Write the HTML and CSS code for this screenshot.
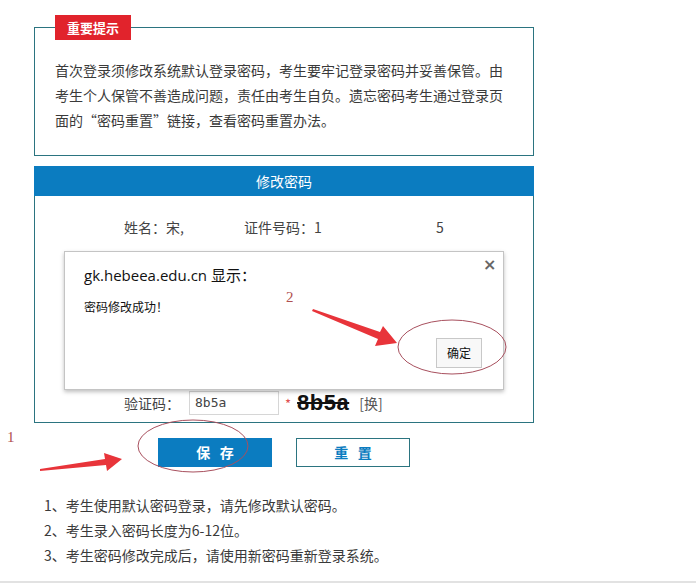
FILE: index.html
```html
<!DOCTYPE html>
<html lang="zh-CN">
<head>
<meta charset="utf-8">
<title>修改密码</title>
<link rel="stylesheet" href="styles.css">
</head>
<body>
<div class="page">
  <div class="notice">
    <div class="notice-tag">重要提示</div>
    <p class="notice-text">首次登录须修改系统默认登录密码，考生要牢记登录密码并妥善保管。由考生个人保管不善造成问题，责任由考生自负。遗忘密码考生通过登录页面的“密码重置”链接，查看密码重置办法。</p>
  </div>

  <div class="panel-head">修改密码</div>
  <div class="panel">
    <div class="row-info">
      <span class="name">姓名：宋,</span>
      <span class="idno">证件号码：1</span>
      <span class="idend">5</span>
    </div>
    <div class="spacer"></div>
    <div class="row-code">
      <span class="label">验证码：</span>
      <span class="input">8b5a</span>
      <span class="star">*</span>
      <span class="captcha">8b5a</span>
      <span class="swap">[换]</span>
    </div>
  </div>

  <div class="actions">
    <span class="btn btn-save">保&nbsp;&nbsp;&nbsp;存</span>
    <span class="btn btn-reset">重&nbsp;&nbsp;&nbsp;置</span>
  </div>

  <ol class="tips">
    <li>1、考生使用默认密码登录，请先修改默认密码。</li>
    <li>2、考生录入密码长度为6-12位。</li>
    <li>3、考生密码修改完成后，请使用新密码重新登录系统。</li>
  </ol>
</div>
<div class="bottom-line"></div>

<div class="dialog">
  <div class="dialog-title">gk.hebeea.edu.cn 显示：</div>
  <span class="dialog-close">×</span>
  <div class="dialog-msg">密码修改成功！</div>
  <span class="dialog-ok">确定</span>
</div>

<svg class="marks" width="696" height="586" viewBox="0 0 696 586">
  <ellipse cx="452" cy="347" rx="54" ry="27" fill="none" stroke="#a8505e" stroke-width="1"/>
  <ellipse cx="193" cy="446" rx="55" ry="26" fill="none" stroke="#a8505e" stroke-width="1"/>
  <polygon points="313,309 380,332 383,326 397,343 375,346 378,339 312,311" fill="#e8343a"/>
  <polygon points="40,469 105,459 104,453 122,459 107,471 106,465 40,471" fill="#e8343a"/>
  <text x="286" y="302" class="num">2</text>
  <text x="7" y="442" class="num">1</text>
</svg>
</body>
</html>
```

FILE: styles.css
```css
* { box-sizing: border-box; }
html, body {
  margin: 0;
  padding: 0;
  background: #ffffff;
  width: 696px;
  height: 586px;
  overflow: hidden;
  position: relative;
  font-family: "Noto Sans CJK SC", "Microsoft YaHei", sans-serif;
  color: #333;
}
.page {
  margin-left: 34px;
  width: 500px;
  padding-top: 27px;
}
.notice {
  position: relative;
  border: 1px solid #2b7480;
  height: 129px;
  padding: 30px 20px 0 20px;
}
.notice-tag {
  position: absolute;
  left: 20px;
  top: -13px;
  width: 76px;
  height: 25px;
  background: #e1232c;
  color: #fff;
  font-size: 13px;
  font-weight: bold;
  line-height: 25px;
  text-align: center;
}
.notice-text {
  margin: 0;
  font-size: 14px;
  line-height: 25px;
  color: #3a3a3a;
}
.panel-head {
  margin-top: 10px;
  height: 30px;
  background: #0b7cc0;
  color: #fff;
  font-size: 14px;
  line-height: 30px;
  text-align: center;
}
.panel {
  border: 1px solid #2b7480;
  border-top: none;
  height: 227px;
  padding-top: 20px;
}
.row-info {
  height: 22px;
  font-size: 14px;
  line-height: 22px;
  color: #444;
  display: flex;
}
.name { margin-left: 89px; width: 120px; }
.idno { width: 192px; }
.spacer { height: 153px; }
.row-code {
  display: flex;
  align-items: center;
  height: 24px;
  font-size: 14px;
  color: #444;
}
.label { margin-left: 89px; width: 65px; }
.input {
  width: 90px;
  height: 24px;
  border: 1px solid #d6d6d6;
  font-family: "DejaVu Sans Mono", monospace;
  font-size: 13px;
  line-height: 22px;
  padding-left: 5px;
  color: #444;
}
.star { color: #e05050; margin-left: 6px; font-size: 13px; }
.captcha {
  margin-left: 6px;
  font-family: "Liberation Sans", sans-serif;
  font-weight: bold;
  font-size: 22px;
  line-height: 22px;
  color: #111;
  letter-spacing: 0.5px;
  text-decoration: line-through;
  text-decoration-thickness: 2px;
}
.swap { margin-left: 10px; color: #555; }
.actions {
  display: flex;
  margin-top: 15px;
  padding-left: 124px;
  gap: 24px;
}
.btn {
  width: 114px;
  height: 29px;
  font-size: 14px;
  font-weight: bold;
  line-height: 27px;
  text-align: center;
}
.btn-save { background: #0b7cc0; color: #fff; border: 1px solid #0b7cc0; }
.btn-reset { background: #fff; color: #0b7cc0; border: 1px solid #2b7480; }
.tips {
  list-style: none;
  margin: 26px 0 0 10px;
  padding: 0;
  font-size: 14px;
  line-height: 25px;
  color: #3a3a3a;
}
.bottom-line {
  position: absolute;
  left: 0;
  top: 581px;
  width: 696px;
  height: 2px;
  background: #e2e2e2;
}
.dialog {
  position: absolute;
  left: 64px;
  top: 251px;
  width: 440px;
  height: 139px;
  background: #fff;
  border: 1px solid #c4c4c4;
  box-shadow: 0 2px 4px rgba(0,0,0,0.25);
}
.dialog-title {
  position: absolute;
  left: 19px;
  top: 12px;
  font-family: "Open Sans", "Noto Sans CJK SC", sans-serif;
  font-size: 15px;
  color: #111;
}
.dialog-close {
  position: absolute;
  left: 418px;
  top: 3px;
  font-family: "DejaVu Sans", sans-serif;
  font-size: 16px;
  font-weight: bold;
  color: #666;
}
.dialog-msg {
  position: absolute;
  left: 19px;
  top: 46px;
  font-size: 12px;
  color: #111;
}
.dialog-ok {
  position: absolute;
  left: 371px;
  top: 86px;
  width: 46px;
  height: 30px;
  border: 1px solid #c8c8c8;
  background: #f8f8f8;
  font-size: 12px;
  line-height: 28px;
  text-align: center;
  color: #111;
}
.marks {
  position: absolute;
  left: 0;
  top: 0;
  pointer-events: none;
}
.num {
  font-family: "Liberation Serif", serif;
  font-size: 15px;
  fill: #b05050;
}
```
